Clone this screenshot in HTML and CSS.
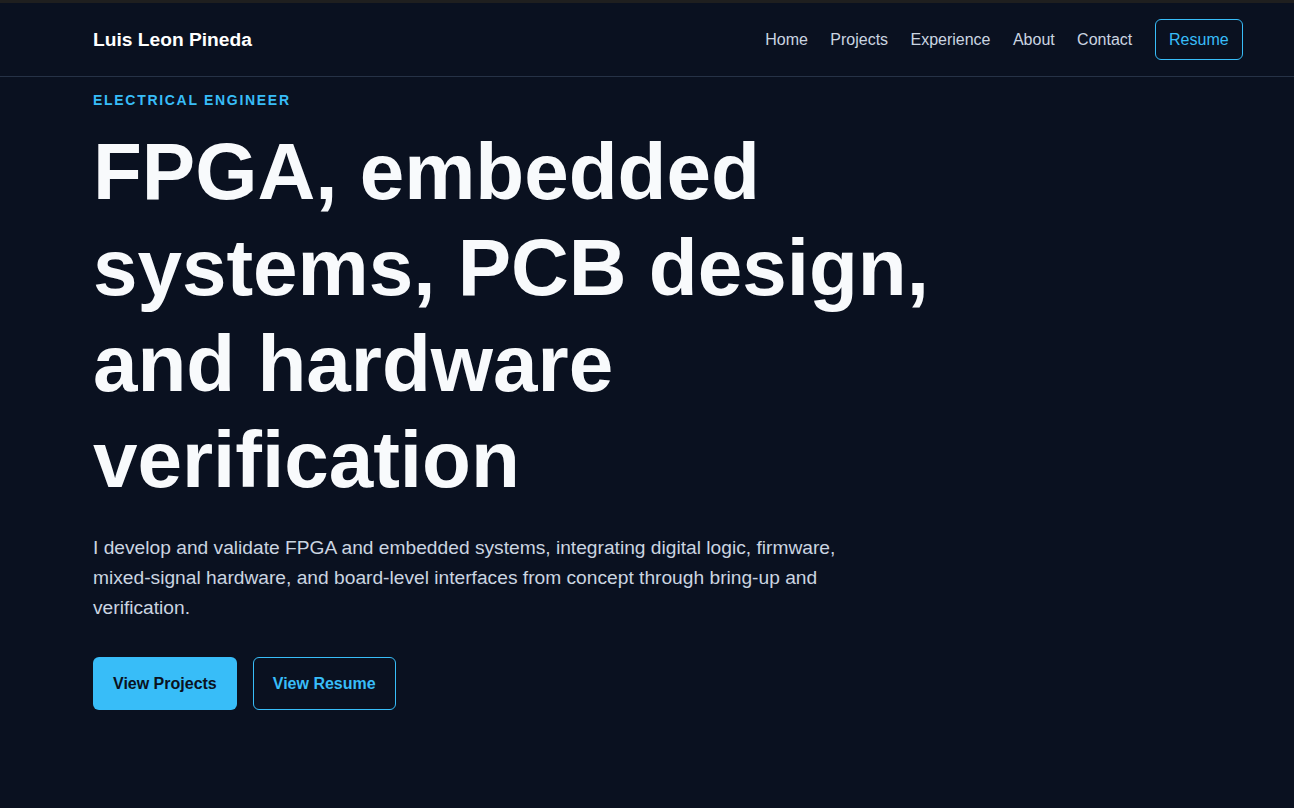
FILE: index.html
```html
<!DOCTYPE html>
<html lang="en">
<head>
    <meta charset="UTF-8">
    <meta name="viewport" content="width=device-width, initial-scale=1.0">
    <title>Luis Leon Pineda</title>
    <link rel="stylesheet" href="styles.css">
</head>
<body>
    <header class="site-header">
        <div class="header-inner">
            <a class="brand" href="#">Luis Leon Pineda</a>
            <nav class="nav">
                <a href="#">Home</a>
                <a href="#projects">Projects</a>
                <a href="#experience">Experience</a>
                <a href="#about">About</a>
                <a href="#contact">Contact</a>
                <a class="nav-resume" href="#resume">Resume</a>
            </nav>
        </div>
    </header>

    <main class="hero">
        <p class="eyebrow">Electrical Engineer</p>
        <h1 class="hero-title">FPGA, embedded systems, PCB design, and hardware verification</h1>
        <p class="hero-text">I develop and validate FPGA and embedded systems, integrating digital logic, firmware, mixed-signal hardware, and board-level interfaces from concept through bring-up and verification.</p>
        <div class="hero-buttons">
            <a class="btn btn-primary" href="#projects">View Projects</a>
            <a class="btn btn-outline" href="#resume">View Resume</a>
        </div>
    </main>
</body>
</html>
```

FILE: styles.css
```css
body {
    margin: 0;
    padding: 0;
    font-family: "Liberation Sans", Arial, sans-serif;
    background-color: #0a1120;
    color: #f8fafc;
    border-top: 3px solid #1f1f1f; /* pasek u góry okna */
    min-height: 100vh;
    box-sizing: border-box;
}

a {
    text-decoration: none;
}

.site-header {
    border-bottom: 1px solid #263246;
    background-color: #0a1120;
}

.header-inner {
    display: flex;
    justify-content: space-between;
    align-items: center;
    padding: 16px 51px 16px 93px;
}

.brand {
    color: #ffffff;
    font-size: 19.2px;
    font-weight: 700;
}

.nav {
    display: flex;
    align-items: center;
    gap: 22.4px;
}

.nav a {
    color: #cbd5e1;
    font-size: 16px;
}

.nav a:hover {
    color: #ffffff;
}

.nav .nav-resume {
    color: #38bdf8;
    border: 1px solid #38bdf8;
    border-radius: 6px;
    padding: 10px 13.4px;
    line-height: 19px;
}

.hero {
    padding: 13px 51px 0 93px;
}

.eyebrow {
    margin: 0;
    color: #38bdf8;
    font-size: 14px;
    font-weight: 700;
    letter-spacing: 1.7px;
    text-transform: uppercase;
    line-height: 21px;
}

.hero-title {
    margin: 13px 0 0;
    max-width: 880px;
    font-size: 80px;
    line-height: 96px;
    font-weight: 700;
    color: #f8fafc;
}

.hero-text {
    margin: 25px 0 0;
    max-width: 780px;
    font-size: 19.2px;
    line-height: 30px;
    color: #cbd5e1;
}

.hero-buttons {
    display: flex;
    gap: 16px;
    margin-top: 34px;
}

.btn {
    display: inline-block;
    padding: 16px 19px;
    border: 1px solid transparent;
    border-radius: 6px;
    font-size: 16px;
    font-weight: 700;
    line-height: 19px;
}

.btn-primary {
    background-color: #38bdf8;
    color: #0a1120;
}

.btn-outline {
    border-color: #38bdf8;
    color: #38bdf8;
}
```
